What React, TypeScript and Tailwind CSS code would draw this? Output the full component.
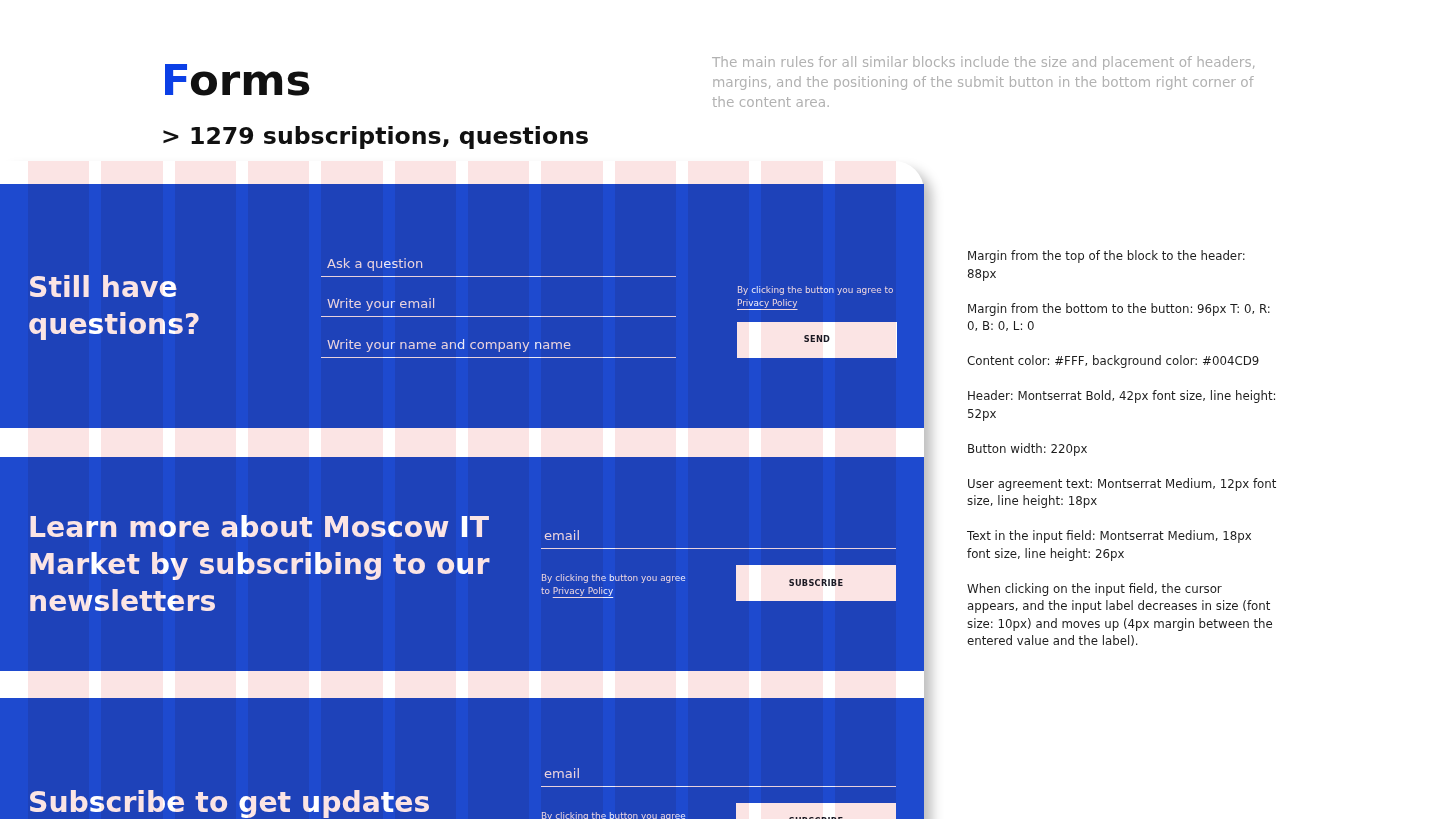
import React from "react";

const FONT = "font-[family-name:'DejaVu_Sans','Open_Sans',sans-serif]";

function Field({ label, inset }: { label: string; inset: string }) {
  return (
    <div className={`border-b border-[#ECEAF6] pb-[3px] ${inset}`}>
      <span className="block text-[13.1px] leading-[18px] text-[#EEECF8] whitespace-nowrap">{label}</span>
    </div>
  );
}

function Agreement({ breakAfterAgree }: { breakAfterAgree: boolean }) {
  const link = <span className="underline underline-offset-[3px] decoration-[1px]">Privacy Policy</span>;
  return (
    <p className="text-[8.9px] leading-[12.6px] text-[#F2F0FA] whitespace-nowrap">
      {breakAfterAgree ? (
        <>
          By clicking the button you agree
          <br />
          to {link}
        </>
      ) : (
        <>
          By clicking the button you agree to
          <br />
          {link}
        </>
      )}
    </p>
  );
}

function Button({ label }: { label: string }) {
  return (
    <button className="h-[36px] w-[160px] bg-white text-[8.2px] font-bold tracking-[0.3px] text-[#1B1B26] uppercase">
      {label}
    </button>
  );
}

function Heading({ children }: { children: React.ReactNode }) {
  return <h2 className="text-[28.3px] leading-[37px] font-bold text-white whitespace-nowrap">{children}</h2>;
}

function QuestionBlock() {
  return (
    <section className="flex h-[244px] items-center bg-[#1E4ACF] pl-[28px]">
      <div className="w-[293px]">
        <Heading>
          Still have
          <br />
          questions?
        </Heading>
      </div>
      <div className="flex items-end">
        <div className="flex w-[355px] flex-col gap-[18.5px]">
          <Field label="Ask a question" inset="pl-[6px]" />
          <Field label="Write your email" inset="pl-[6px]" />
          <Field label="Write your name and company name" inset="pl-[6px]" />
        </div>
        <div className="ml-[61px] flex w-[160px] flex-col">
          <Agreement breakAfterAgree={false} />
          <div className="mt-[12px]">
            <Button label="Send" />
          </div>
        </div>
      </div>
    </section>
  );
}

function SubscribeBlock({ title, tall }: { title: React.ReactNode; tall: boolean }) {
  return (
    <section className={`flex ${tall ? "h-[214px]" : "h-[208px]"} items-center bg-[#1E4ACF] pl-[28px]`}>
      <div className="w-[513px]">
        <Heading>{title}</Heading>
      </div>
      <div className="flex w-[355px] flex-col">
        <Field label="email" inset="pl-[3px]" />
        <div className="mt-[16px] flex items-start justify-between">
          <div className="mt-[7px]">
            <Agreement breakAfterAgree={true} />
          </div>
          <Button label="Subscribe" />
        </div>
      </div>
    </section>
  );
}

const notes: string[][] = [
  ["Margin from the top of the block to the header:", "88px"],
  ["Margin from the bottom to the button: 96px T: 0, R:", "0, B: 0, L: 0"],
  ["Content color: #FFF, background color: #004CD9"],
  ["Header: Montserrat Bold, 42px font size, line height:", "52px"],
  ["Button width: 220px"],
  ["User agreement text: Montserrat Medium, 12px font", "size, line height: 18px"],
  ["Text in the input field: Montserrat Medium, 18px", "font size, line height: 26px"],
  [
    "When clicking on the input field, the cursor",
    "appears, and the input label decreases in size (font",
    "size: 10px) and moves up (4px margin between the",
    "entered value and the label).",
  ],
];

export default function App() {
  return (
    <div className={`relative h-[819px] w-[1440px] overflow-hidden bg-white ${FONT}`}>
      {/* page header */}
      <header className="flex h-[161px]">
        <div className="w-[712px] pl-[161px] pt-[52px]">
          <h1 className="text-[43.5px] leading-[56px] font-bold text-[#111111]">
            <span className="text-[#0B3FE6]">F</span>orms
          </h1>
          <p className="mt-[12px] text-[23.6px] leading-[32px] font-bold text-[#111111] whitespace-nowrap">
            &gt; 1279 subscriptions, questions
          </p>
        </div>
        <p className="pt-[52px] text-[13.7px] leading-[20px] text-[#B2B2B2] whitespace-nowrap">
          The main rules for all similar blocks include the size and placement of headers,
          <br />
          margins, and the positioning of the submit button in the bottom right corner of
          <br />
          the content area.
        </p>
      </header>

      <div className="flex">
        {/* form showcase card with the 12-column grid laid over it */}
        <div className="relative w-[924px] shrink-0 rounded-tr-[30px] bg-white pt-[23px] shadow-[10px_6px_12px_-2px_rgba(0,0,0,0.25)]">
          <QuestionBlock />
          <div className="mt-[29px]">
            <SubscribeBlock
              tall={true}
              title={
                <>
                  Learn more about Moscow IT
                  <br />
                  Market by subscribing to our
                  <br />
                  newsletters
                </>
              }
            />
          </div>
          <div className="mt-[27px]">
            <SubscribeBlock tall={false} title="Subscribe to get updates" />
          </div>
          <div className="pointer-events-none absolute inset-y-0 left-[28px] grid w-[868px] grid-cols-12 gap-x-[12px] mix-blend-multiply">
            {Array.from({ length: 12 }).map((_, i) => (
              <div key={i} className="bg-[#FBE4E4]" />
            ))}
          </div>
        </div>

        {/* spec notes */}
        <div className="ml-[43px] pt-[87px] text-[11.8px] leading-[17.5px] text-[#1E1E1E] whitespace-nowrap">
          {notes.map((lines, i) => (
            <p key={i} className="mb-[17.5px]">
              {lines.map((l, j) => (
                <React.Fragment key={j}>
                  {l}
                  {j < lines.length - 1 && <br />}
                </React.Fragment>
              ))}
            </p>
          ))}
        </div>
      </div>
    </div>
  );
}
